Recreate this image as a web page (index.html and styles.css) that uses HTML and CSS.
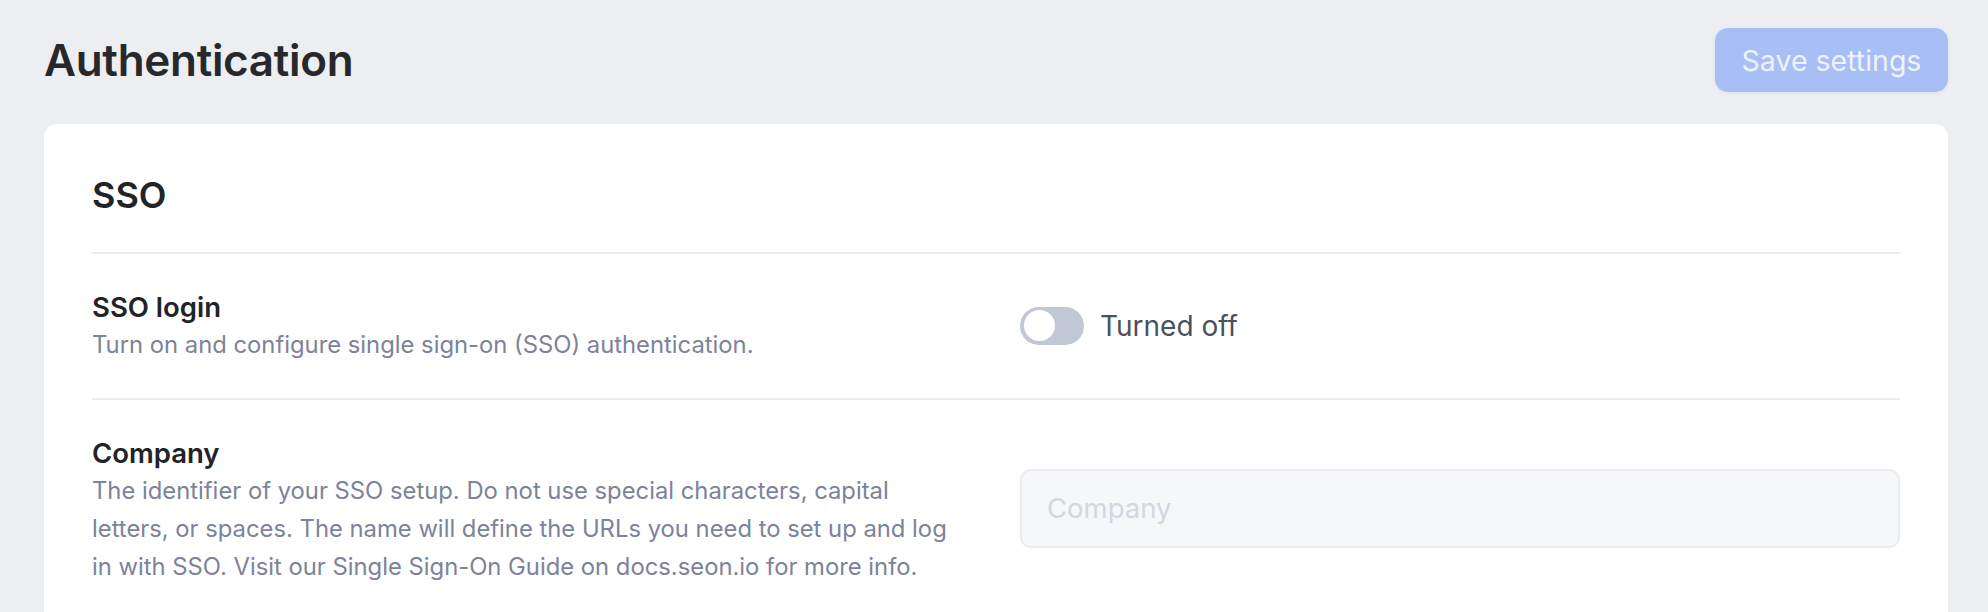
FILE: index.html
```html
<!DOCTYPE html>
<html lang="en">
<head>
<meta charset="utf-8">
<title>Authentication</title>
<link rel="stylesheet" href="styles.css">
</head>
<body>
<div class="page">
  <header class="page-header">
    <h1 class="page-title">Authentication</h1>
    <button class="btn-save" type="button" disabled>Save settings</button>
  </header>
  <section class="card">
    <h2 class="card-title">SSO</h2>
    <div class="row">
      <div class="row-info">
        <h3 class="row-title">SSO login</h3>
        <p class="row-desc">Turn on and configure single sign-on (SSO) authentication.</p>
      </div>
      <div class="row-control">
        <label class="toggle">
          <span class="toggle-track"><span class="toggle-knob"></span></span>
          <span class="toggle-label">Turned off</span>
        </label>
      </div>
    </div>
    <div class="row">
      <div class="row-info">
        <h3 class="row-title">Company</h3>
        <p class="row-desc">The identifier of your SSO setup. Do not use special characters, capital letters, or spaces. The name will define the URLs you need to set up and log in with SSO. Visit our Single Sign-On Guide on docs.seon.io for more info.</p>
      </div>
      <div class="row-control">
        <input class="text-input" type="text" placeholder="Company" disabled>
      </div>
    </div>
  </section>
</div>
</body>
</html>
```
FILE: styles.css
```css
* { box-sizing: border-box; }
html, body {
  margin: 0;
  padding: 0;
  height: 100%;
  overflow: hidden;
}
body {
  background: #edeef2;
  font-family: Inter, "Noto Sans", "Liberation Sans", sans-serif;
  color: #25262b;
}
.page {
  padding: 28px 40px 0 44px;
}
.page-header {
  display: flex;
  align-items: center;
  justify-content: space-between;
  height: 64px;
}
.page-title {
  margin: 0;
  font-size: 44px;
  line-height: 54px;
  font-weight: 600;
  color: #27282c;
  letter-spacing: -0.3px;
}
.btn-save {
  height: 64px;
  width: 233px;
  border: none;
  border-radius: 13px;
  background: #a8bff6;
  color: #eef2fd;
  font-family: inherit;
  font-size: 28.5px;
  font-weight: 400;
  box-shadow: 0 1px 3px rgba(60, 70, 100, 0.08);
  padding: 0;
}
.card {
  margin-top: 32px;
  background: #ffffff;
  border-radius: 13px 13px 0 0;
  padding: 49px 48px 200px 48px;
}
.card-title {
  margin: 0;
  font-size: 36px;
  line-height: 44.8px;
  font-weight: 600;
  color: #232428;
  padding-bottom: 34px;
  border-bottom: 2px solid #ebebf0;
}
.row {
  display: grid;
  grid-template-columns: 1fr 1fr;
  column-gap: 48px;
  align-items: center;
  padding: 34px 0;
  border-bottom: 2px solid #ebebf0;
}
.row-title {
  margin: 0;
  font-size: 27.5px;
  line-height: 38px;
  font-weight: 600;
  color: #222327;
}
.row-desc {
  margin: 0;
  font-size: 23.8px;
  line-height: 38px;
  color: #7d8398;
}
.row-control {
  display: flex;
  align-items: center;
}
.toggle {
  display: flex;
  align-items: center;
  gap: 16px;
}
.toggle-track {
  width: 64px;
  height: 38.4px;
  border-radius: 20px;
  background: #c1c7d3;
  display: flex;
  align-items: center;
  padding: 0 4px;
}
.toggle-knob {
  width: 31px;
  height: 31px;
  border-radius: 50%;
  background: #ffffff;
}
.toggle-label {
  font-size: 28px;
  color: #4b505d;
}
.text-input {
  width: 100%;
  height: 79px;
  margin-top: -3px;
  border: 2px solid #eaecf0;
  border-radius: 11px;
  background: #f6f7f9;
  padding: 0 25px;
  font-family: inherit;
  font-size: 27.5px;
  color: #25262b;
}
.text-input::placeholder {
  color: #d3d7df;
}
```
